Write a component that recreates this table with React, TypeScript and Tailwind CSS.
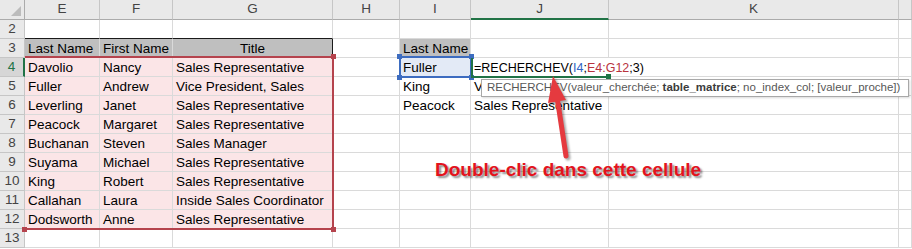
import type { ReactNode } from "react";

const employees = [
  ["Davolio", "Nancy", "Sales Representative"],
  ["Fuller", "Andrew", "Vice President, Sales"],
  ["Leverling", "Janet", "Sales Representative"],
  ["Peacock", "Margaret", "Sales Representative"],
  ["Buchanan", "Steven", "Sales Manager"],
  ["Suyama", "Michael", "Sales Representative"],
  ["King", "Robert", "Sales Representative"],
  ["Callahan", "Laura", "Inside Sales Coordinator"],
  ["Dodsworth", "Anne", "Sales Representative"],
];

const columns = ["E", "F", "G", "H", "I", "J", "K", ""];

const lookup: Record<number, [string, ReactNode]> = {
  3: ["Last Name", ""],
  4: [
    "Fuller",
    <span className="text-[12.5px]">
      =RECHERCHEV(<span className="text-[#2f63c4]">I4</span>;
      <span className="text-[#b8333d]">E4:G12</span>;3)
    </span>,
  ],
  5: ["King", "Vice President, Sales"],
  6: ["Peacock", "Sales Representative"],
};

const base =
  "border-r border-b border-[#dadada] px-[3px] pb-[2px] flex items-end whitespace-nowrap leading-none";

function Cell({ children, className = "" }: { children?: ReactNode; className?: string }) {
  return <div className={`${base} ${className}`}>{children}</div>;
}

// little square handles at the corners of a range border
function Handle({ className, color }: { className: string; color: string }) {
  return <div className={`absolute w-[5px] h-[5px] ${color} ${className}`} />;
}

function SheetRow({ n }: { n: number }) {
  const emp = n >= 4 && n <= 12 ? employees[n - 4] : null;
  const right = lookup[n];
  const selected = n === 4;

  return (
    <>
      <div
        className={`flex items-center justify-center border-b border-r text-[13.5px] ${
          selected
            ? "bg-[#d6d6d6] text-[#217346] border-r-[#217346] border-r-2 border-b-[#c6c6c6]"
            : "bg-[#e9e9e9] text-[#444] border-[#c6c6c6]"
        }`}
      >
        {n}
      </div>

      {n === 3 ? (
        <>
          <Cell className="bg-[#bfbfbf] border-[#1a1a1a]">Last Name</Cell>
          <Cell className="bg-[#bfbfbf] border-[#1a1a1a]">First Name</Cell>
          <Cell className="bg-[#bfbfbf] border-r-[#1a1a1a] border-b-[#1a1a1a] justify-center">Title</Cell>
        </>
      ) : emp ? (
        <>
          <Cell className="bg-[#fbe5e7] border-[#d8cdce]">{emp[0]}</Cell>
          <Cell className="bg-[#fbe5e7] border-[#d8cdce]">{emp[1]}</Cell>
          <Cell className="bg-[#fbe5e7] border-[#d8cdce]">{emp[2]}</Cell>
        </>
      ) : (
        <>
          <Cell className={n === 2 ? "border-b-[#1a1a1a]" : ""} />
          <Cell className={n === 2 ? "border-b-[#1a1a1a]" : ""} />
          <Cell className={n === 2 ? "border-b-[#1a1a1a]" : ""} />
        </>
      )}

      <Cell />
      <Cell className={n === 3 ? "bg-[#bfbfbf]" : n === 4 ? "bg-[#e3eaf6]" : ""}>{right?.[0]}</Cell>
      <Cell className={n === 4 ? "border-r-0" : ""}>{right?.[1]}</Cell>
      <Cell />
      <Cell />
    </>
  );
}

export default function App() {
  const rows = Array.from({ length: 12 }, (_, i) => i + 2);

  return (
    <div className="relative w-[912px] h-[249px] overflow-hidden bg-white font-['Liberation_Sans',Arial,sans-serif] text-[13.5px] text-black">
      <div className="grid grid-cols-[25px_75px_73px_160px_67px_71px_138px_290px_1fr] grid-rows-[20px_repeat(12,19px)]">
        <div className="relative bg-[#e9e9e9] border-r border-b border-[#ababab]">
          <div className="absolute right-[3px] bottom-[3px] w-0 h-0 border-l-[10px] border-l-transparent border-b-[10px] border-b-[#bcbcbc]" />
        </div>
        {columns.map((c) => (
          <div
            key={c || "L"}
            className={`flex items-center justify-center bg-[#e9e9e9] text-[#444] border-r border-r-[#c6c6c6] ${
              c === "J" ? "border-b-2 border-b-[#217346] bg-[#dcdcdc]" : "border-b border-b-[#ababab]"
            }`}
          >
            {c}
          </div>
        ))}
        {rows.map((n) => (
          <SheetRow key={n} n={n} />
        ))}
      </div>

      {/* range E4:G12 */}
      <div className="absolute left-[25px] top-[56px] w-[309px] h-[174px] border-2 border-l-0 border-[#b5434d]">
        <Handle color="bg-[#b5434d]" className="-right-[4px] -top-[4px]" />
        <Handle color="bg-[#b5434d]" className="-right-[4px] -bottom-[4px]" />
        <Handle color="bg-[#b5434d]" className="-left-[3px] -bottom-[4px]" />
      </div>

      {/* range I4 */}
      <div className="absolute left-[399px] top-[56px] w-[73px] h-[22px] border-2 border-[#3d6cc0]">
        <Handle color="bg-[#3d6cc0]" className="-left-[4px] -top-[4px]" />
        <Handle color="bg-[#3d6cc0]" className="-right-[4px] -top-[4px]" />
        <Handle color="bg-[#3d6cc0]" className="-left-[4px] -bottom-[4px]" />
        <Handle color="bg-[#3d6cc0]" className="-right-[4px] -bottom-[4px]" />
      </div>

      {/* active cell J4 */}
      <div className="absolute left-[471px] top-[58px] w-[137px] h-[20px] border-l-2 border-b-2 border-[#217346]">
        <Handle color="bg-[#217346]" className="-right-[3px] -bottom-[3px]" />
      </div>

      {/* function tooltip */}
      <div className="absolute left-[481px] top-[79px] h-[18px] pl-[5px] pr-[8px] flex items-center bg-white border border-[#a8a8a8] shadow-[1px_1px_2px_rgba(0,0,0,0.15)] text-[11.5px] text-[#575757] whitespace-nowrap">
        RECHERCHEV(valeur_cherchée;{" "}
        <b className="text-[#3c3c3c] ml-[3px]">table_matrice</b>; no_index_col; [valeur_proche])
      </div>

      {/* arrow */}
      <svg
        className="absolute left-0 top-0 drop-shadow-[2px_2px_1px_rgba(0,0,0,0.35)]"
        width="912"
        height="249"
      >
        <line x1="566" y1="156" x2="557.5" y2="100" stroke="#e53a3f" strokeWidth="5" strokeLinecap="round" />
        <polygon points="553,76 566,100 548,103" fill="#e53a3f" />
      </svg>

      <div className="absolute left-[435px] top-[160px] font-bold text-[19px] leading-none text-[#e3131d] [text-shadow:2px_2px_2px_rgba(0,0,0,0.45)]">
        Double-clic dans cette cellule
      </div>
    </div>
  );
}
